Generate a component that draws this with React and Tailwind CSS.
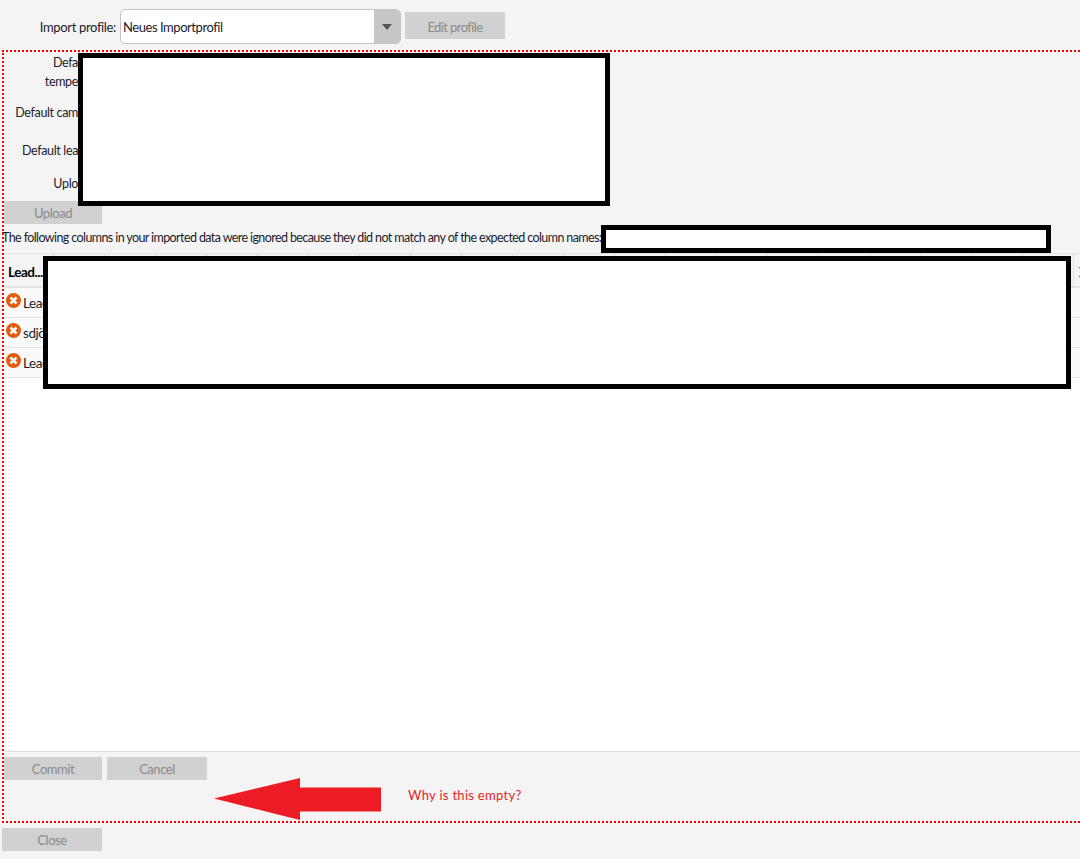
const columnCount = 20

function ActionButton({ label, className = '' }) {
  return (
    <button className={`flex h-[23px] items-center justify-center bg-[#d1d1d1] text-[13px] text-[#8a8a8a] ${className}`}>
      {label}
    </button>
  )
}

function ErrorIcon() {
  return (
    <svg width="15" height="15" viewBox="0 0 15 15" className="shrink-0">
      <circle cx="7.5" cy="7.5" r="7.5" fill="#e65a0c" />
      <path d="M4.5 4.5l6 6M10.5 4.5l-6 6" stroke="#fff" strokeWidth="2.5" />
    </svg>
  )
}

function Redaction({ className }) {
  return <div className={`absolute border-[5px] border-black bg-white ${className}`} />
}

function FormRow({ className = '', children }) {
  return (
    <div className={`flex w-[74px] items-center justify-end whitespace-nowrap pt-[4px] text-right tracking-[-0.35px] ${className}`}>
      {children}
    </div>
  )
}

function DataRow({ text }) {
  return (
    <div className="flex h-[30px] items-center gap-[2px] border-b border-[#e4e4e4] bg-[#fafafa] pl-[2px] text-[13.5px]">
      <div className="-mt-[5px]">
        <ErrorIcon />
      </div>
      <span className="pt-[2px]">{text}</span>
    </div>
  )
}

export default function App() {
  return (
    <div className="relative h-[859px] w-[1080px] overflow-hidden bg-[#f4f4f4] font-['Lato',sans-serif] text-[12.5px] tracking-[-0.45px] text-[#1c1c2b]">
      <div className="flex h-[50px] items-start pt-[9px]">
        <div className="flex h-[35px] w-[116px] items-center justify-end pt-[2px] text-[13px] tracking-[-0.35px]">Import profile:</div>
        <div className="ml-[4px] flex h-[35px] w-[281px] overflow-hidden rounded-[5px] border border-[#c4c4c4] bg-white">
          <div className="flex flex-1 items-center pt-[2px] pl-[2px] text-[13px]">Neues Importprofil</div>
          <div className="flex w-[26px] items-center justify-center bg-[#c6c6c6]">
            <div className="h-0 w-0 border-x-[5px] border-t-[6px] border-x-transparent border-t-[#555]" />
          </div>
        </div>
        <ActionButton label="Edit profile" className="mt-[3px] ml-[4px] h-[27px] w-[100px] pt-[4px] tracking-[-0.6px]" />
      </div>

      <div className="ml-[2px] flex h-[773px] w-[1090px] flex-col border-2 border-dotted border-[#f00000]">
        <div className="flex h-[149px] flex-col">
          <FormRow className="h-[18px]">Defa</FormRow>
          <FormRow className="h-[20px]">tempe</FormRow>
          <FormRow className="mt-[11px] h-[20px]">Default cam</FormRow>
          <FormRow className="mt-[18px] h-[20px]">Default lea</FormRow>
          <FormRow className="mt-[13px] h-[20px]">Uplo</FormRow>
        </div>
        <ActionButton label="Upload" className="h-[21px] w-[98px] pt-[2px]" />
        <div className="-ml-[2px] flex h-[29px] items-center whitespace-nowrap tracking-[-0.6px]">
          The following columns in your imported data were ignored because they did not match any of the expected column names:
        </div>

        <div className="flex flex-1 flex-col bg-white">
          <div className="flex h-[35px] border-y border-b-2 border-y-[#e2e2e2] bg-[#f4f4f4]">
            <div className="flex w-[50px] shrink-0 items-center border-r border-[#e2e2e2] pt-[5px] pl-[4px] text-[13.5px] font-bold text-black">Lead...</div>
            {Array.from({ length: columnCount }, (_, i) => (
              <div key={i} className="w-[51px] shrink-0 border-r border-[#e2e2e2]" />
            ))}
            <div className="flex shrink-0 items-center pt-[5px] pl-[5px] text-[13.5px] font-bold text-black">X</div>
          </div>
          <DataRow text="Lead" />
          <DataRow text="sdjö" />
          <DataRow text="Lead" />
        </div>

        <div className="flex h-[70px] gap-[5px] border-t border-[#dedede] pt-[5px]">
          <ActionButton label="Commit" className="w-[98px] pt-[2px]" />
          <ActionButton label="Cancel" className="w-[100px] pt-[2px]" />
        </div>
      </div>

      <ActionButton label="Close" className="mt-[5px] ml-[2px] w-[100px] pt-[2px]" />

      <Redaction className="top-[53px] left-[78px] h-[153px] w-[532px]" />
      <Redaction className="top-[225px] left-[601px] h-[28px] w-[450px]" />
      <Redaction className="top-[256px] left-[43px] h-[133px] w-[1028px]" />

      <svg className="absolute top-[777px] left-[213px]" width="169" height="44" viewBox="0 0 169 44">
        <path d="M1 21.5L87 1v9.5h81v24H87v8.5z" fill="#ed1c24" />
      </svg>
      <span className="absolute top-[786px] left-[408px] text-[13px] tracking-[0.3px] text-[#ed1c24]">Why is this empty?</span>
    </div>
  )
}
